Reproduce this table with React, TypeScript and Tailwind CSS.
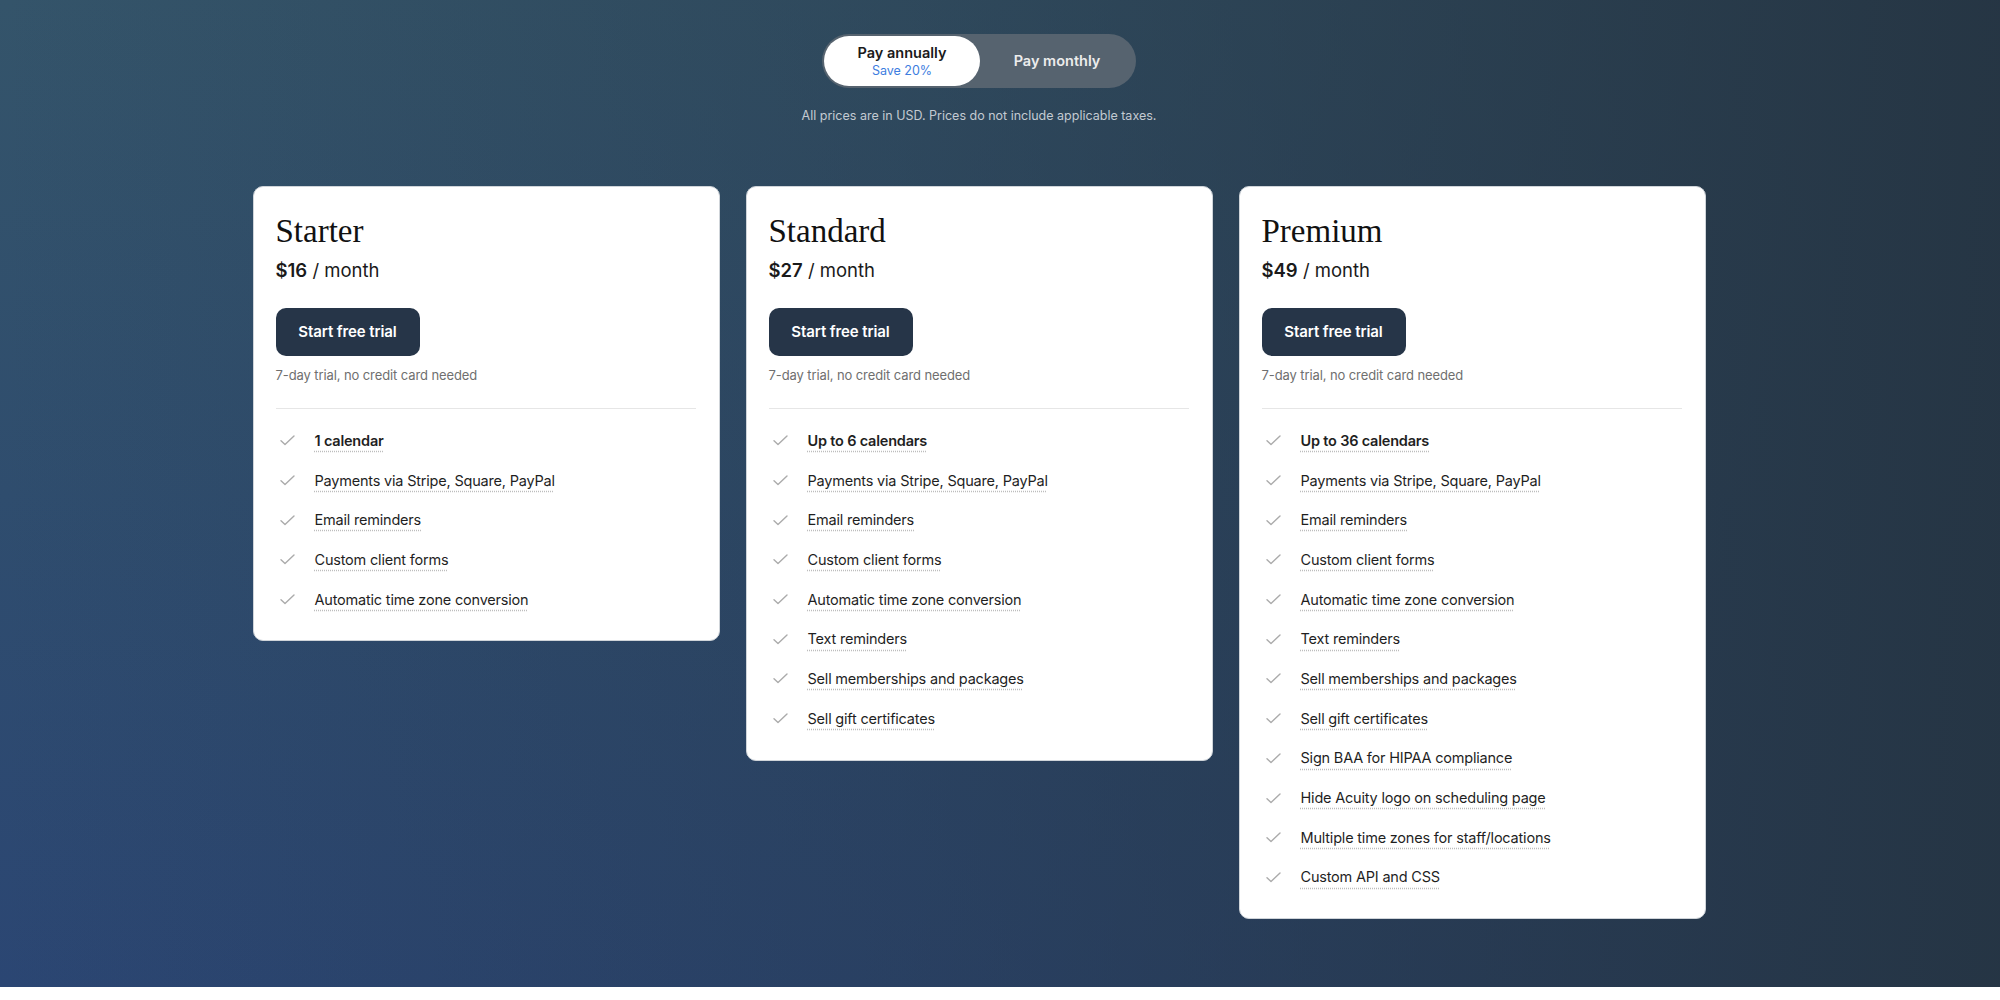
import React from "react";

type Plan = {
  name: string;
  price: string;
  features: string[];
};

const common = [
  "Payments via Stripe, Square, PayPal",
  "Email reminders",
  "Custom client forms",
  "Automatic time zone conversion",
];

const plans: Plan[] = [
  { name: "Starter", price: "$16", features: ["1 calendar", ...common] },
  {
    name: "Standard",
    price: "$27",
    features: [
      "Up to 6 calendars",
      ...common,
      "Text reminders",
      "Sell memberships and packages",
      "Sell gift certificates",
    ],
  },
  {
    name: "Premium",
    price: "$49",
    features: [
      "Up to 36 calendars",
      ...common,
      "Text reminders",
      "Sell memberships and packages",
      "Sell gift certificates",
      "Sign BAA for HIPAA compliance",
      "Hide Acuity logo on scheduling page",
      "Multiple time zones for staff/locations",
      "Custom API and CSS",
    ],
  },
];

function Check() {
  return (
    <svg width="15" height="11" viewBox="0 0 15 11" fill="none" className="ml-[4px]">
      <path d="M1 5.8 L5 9.6 L14 1" stroke="#ababab" strokeWidth="1.4" strokeLinecap="round" strokeLinejoin="round" />
    </svg>
  );
}

function Card({ plan }: { plan: Plan }) {
  return (
    <div className="w-[467px] bg-white rounded-[10px] border border-[#cfd4d9] pl-[22px] pr-[23px] pt-6 pb-[21px]">
      <div className="text-[33px] leading-[40px] text-[#111] font-['Liberation_Serif',serif]">{plan.name}</div>
      <div className="mt-[5px] text-[18.5px] leading-[28px] text-[#1a1a1a]">
        <span className="font-semibold">{plan.price}</span> / month
      </div>
      <button className="mt-6 h-12 w-[144px] rounded-[10px] bg-[#263548] text-white text-[15px] font-semibold tracking-[-0.1px]">
        Start free trial
      </button>
      <div className="mt-[9px] text-[13px] leading-5 text-[#6f6f6f] tracking-[-0.1px]">7-day trial, no credit card needed</div>
      <div className="mt-[23px] h-px bg-[#e6e6e6]" />
      <ul className="mt-[12px]">
        {plan.features.map((f, i) => (
          <li key={f} className="h-[39.7px] flex items-center">
            <span className="w-[39px] flex items-center">
              <Check />
            </span>
            <span
              className={`text-[14.5px] tracking-[-0.2px] leading-5 text-[#1f1f1f] underline decoration-dotted decoration-[#bdbdbd] underline-offset-[5px] ${
                i === 0 ? "font-semibold" : ""
              }`}
            >
              {f}
            </span>
          </li>
        ))}
      </ul>
    </div>
  );
}

export default function App() {
  return (
    <div className="w-[2000px] min-h-[1000px] bg-white font-['Inter',sans-serif]">
      <div className="h-[987px] bg-[linear-gradient(90deg,rgba(37,52,66,0)_0%,rgba(37,52,66,0.35)_45%,rgba(37,52,66,0.95)_100%),linear-gradient(180deg,#34546a_0%,#2f4d6e_50%,#2b4673_100%)]">
        <div className="flex flex-col items-center pt-[34px] pr-[42px]">
          <div className="flex p-[2px] rounded-full bg-[#56636f]">
            <div className="w-[156px] h-[50px] rounded-full bg-white flex flex-col items-center justify-center">
              <span className="text-[14.5px] leading-[18px] font-semibold text-[#1a1a1a]">Pay annually</span>
              <span className="text-[12.5px] leading-[17px] text-[#3d7de0]">Save 20%</span>
            </div>
            <div className="w-[154px] h-[50px] flex items-center justify-center">
              <span className="text-[14.5px] font-semibold text-[#ececec]">Pay monthly</span>
            </div>
          </div>
          <div className="mt-[18px] text-[12.5px] leading-5 text-[#c3cad2]">
            All prices are in USD. Prices do not include applicable taxes.
          </div>
          <div className="mt-[60px] flex items-start gap-[26px]">
            {plans.map((p) => (
              <Card key={p.name} plan={p} />
            ))}
          </div>
        </div>
      </div>
    </div>
  );
}
